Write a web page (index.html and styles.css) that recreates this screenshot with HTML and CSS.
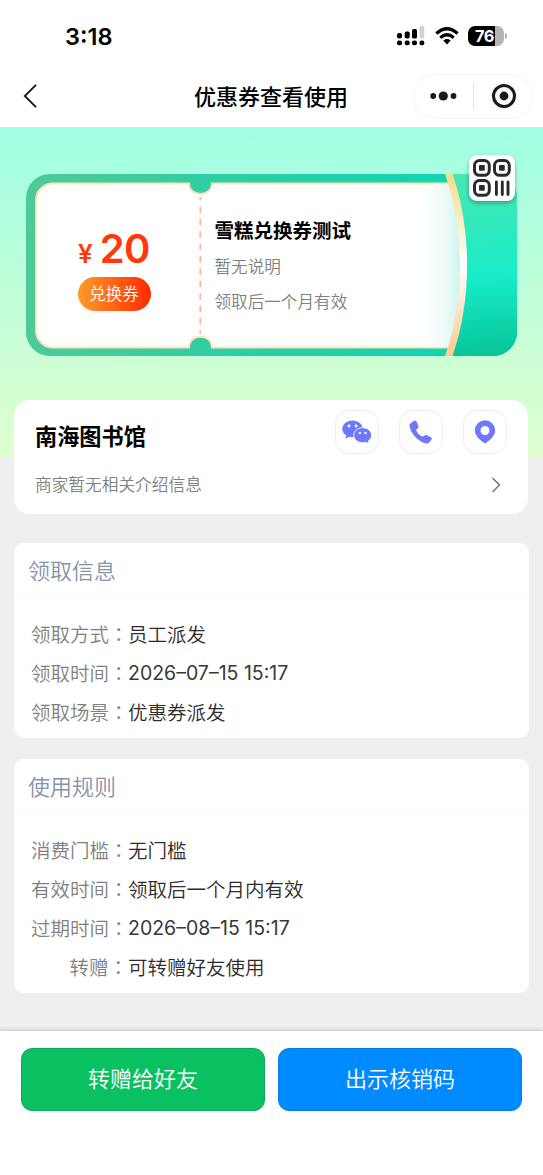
FILE: index.html
```html
<!DOCTYPE html>
<html lang="zh-CN">
<head>
<meta charset="utf-8">
<meta name="viewport" content="width=device-width, initial-scale=1">
<title>优惠券查看使用</title>
<link rel="stylesheet" href="styles.css">
</head>
<body>
<div class="page">
  <header class="statusbar">
    <span class="time">3:18</span>
    <div class="status-icons">
      <svg width="28" height="20" viewBox="0 0 28 20">
        <rect x="0" y="7" width="5" height="5.5" rx="2"/><rect x="7.7" y="5.5" width="5" height="7" rx="1.8"/><rect x="15" y="3" width="5" height="9.5" rx="1.6"/><rect x="22.5" y="0" width="4.8" height="12.5" rx="1.6" fill="#d2d2d2"/>
        <rect x="0" y="14.5" width="5" height="4.8" rx="2"/><rect x="7.7" y="14.5" width="5" height="4.8" rx="2"/><rect x="15" y="14.5" width="5" height="4.8" rx="2"/><rect x="22.5" y="14.5" width="4.8" height="4.8" rx="2"/>
      </svg>
      <svg class="wifi" width="24" height="18" viewBox="0 0 24 18">
        <path d="M1.4 6.5Q12 -3 22.6 6.5M5.3 10.7Q12 4.8 18.7 10.7" fill="none" stroke="#000" stroke-width="3.2"/>
        <path d="M8.3 13.4Q12 10.6 15.7 13.4L12 17.4Z"/>
      </svg>
      <div class="battery"><span class="level">76</span></div>
    </div>
  </header>
  <nav class="navbar">
    <svg class="back" width="14" height="24" viewBox="0 0 14 24"><path d="M13 .8 1.8 12 13 23.2" fill="none" stroke="#191919" stroke-width="1.9"/></svg>
    <h1 class="nav-title">优惠券查看使用</h1>
    <div class="capsule">
      <svg width="27" height="10" viewBox="0 0 27 10"><circle cx="3.2" cy="5" r="2.9"/><circle cx="13.3" cy="5" r="4.6"/><circle cx="23.5" cy="5" r="2.9"/></svg>
      <i class="divider"></i>
      <svg width="24" height="24" viewBox="0 0 24 24"><circle cx="12" cy="12" r="10.5" fill="none" stroke="#191919" stroke-width="3"/><circle cx="12" cy="12" r="4.4"/></svg>
    </div>
  </nav>

  <main class="content">
    <section class="ticket">
      <svg class="ticket-art" width="491" height="182" viewBox="0 0 491 182">
        <defs>
          <linearGradient id="frame"><stop offset="0" stop-color="#4eca99"/><stop offset=".5" stop-color="#26cfa6"/><stop offset="1" stop-color="#08d6b7"/></linearGradient>
          <linearGradient id="shade"><stop offset="0" stop-color="#fff"/><stop offset=".55" stop-color="#f0fbf9"/><stop offset="1" stop-color="#c9f4ec"/></linearGradient>
          <linearGradient id="flap" gradientUnits="userSpaceOnUse" x1="450" y1="0" x2="458" y2="182"><stop offset="0" stop-color="#48e6b1"/><stop offset=".57" stop-color="#18ecc8"/><stop offset="1" stop-color="#08c499"/></linearGradient>
          <linearGradient id="ribbon" x2="0" y2="1"><stop offset="0" stop-color="#f3dc8b"/><stop offset=".5" stop-color="#fff"/><stop offset="1" stop-color="#ffc98c"/></linearGradient>
          <clipPath id="curve"><path d="M0 0H420C440 56 438 126 420 182H0Z"/></clipPath>
        </defs>
        <rect width="491" height="182" rx="24" fill="url(#frame)"/>
        <g clip-path="url(#curve)">
          <path d="M27 9.5H163C163.5 23.5 185.5 23.5 186 9.5H450V173.5H186C185.5 159 163.5 159 163 173.5H27A17 17 0 0 1 10 156.5V26.5A17 17 0 0 1 27 9.5Z" fill="#fff" stroke="#ffe3b8" stroke-width="2"/>
          <rect x="395" y="10.5" width="42" height="162" fill="url(#shade)"/>
        </g>
        <path d="M174.3 23V160" stroke="#ffb596" stroke-width="1.7" stroke-dasharray="6.5 5.9" stroke-dashoffset="3"/>
        <path d="M426 0H467A24 24 0 0 1 491 24V158A24 24 0 0 1 467 182H426C446 126 446 56 426 0Z" fill="url(#flap)"/>
        <path d="M419 0H426.5C446 56 446 126 426.5 182H419C439 126 439 56 419 0Z" fill="url(#ribbon)"/>
      </svg>
      <div class="value">
        <div class="price"><span class="yen">¥</span><span class="amount">20</span></div>
        <span class="tag">兑换券</span>
      </div>
      <div class="detail">
        <h2>雪糕兑换券测试</h2>
        <p>暂无说明</p>
        <p>领取后一个月有效</p>
      </div>
      <div class="qr">
        <svg width="38" height="38" viewBox="0 0 38 38" fill="none" stroke="#2b2b2d">
          <g stroke-width="3"><rect x="1.5" y="1.5" width="14.8" height="14.8" rx="5"/><rect x="21.5" y="1.5" width="14.8" height="14.8" rx="5"/><rect x="1.5" y="21.5" width="14.8" height="14.8" rx="5"/></g>
          <g fill="#2b2b2d" stroke="none"><rect x="6" y="6" width="5.8" height="5.8" rx="1"/><rect x="26" y="6" width="5.8" height="5.8" rx="1"/><rect x="6" y="26" width="5.8" height="5.8" rx="1"/></g>
          <path d="M23.4 23V35.5M29.3 23V35.5M35 23V35.5" stroke-width="2.9" stroke-linecap="round"/>
        </svg>
      </div>
    </section>

    <section class="shop">
      <div class="shop-head">
        <h2>南海图书馆</h2>
        <div class="actions">
          <span class="action"><svg width="30" height="24" viewBox="0 0 30 24" fill="#6f78fb">
            <path d="M10.5 .5C4.7 .5.3 4.3.3 8.9c0 2.8 1.6 5.1 4 6.6l-1 3.3 3.900-2.100c1.100.3 2.200.5 3.500.5 5.700 0 10-3.700 10-8.300S16.300.5 10.500.5Z"/>
            <path d="M20.700 7.700c-5.200 0-9 3.400-9 7.500s3.800 7.500 9 7.500c1.100 0 2.100-.2 3-.4l3.400 1.600-.8-2.900c2-1.400 3.300-3.400 3.300-5.800 0-4.100-3.900-7.500-8.900-7.500Z" stroke="#fff" stroke-width=".9"/>
            <g fill="#fff"><circle cx="7" cy="6" r="1.4"/><circle cx="14" cy="6" r="1.4"/><circle cx="17.9" cy="12.9" r="1.2"/><circle cx="23.5" cy="12.9" r="1.2"/></g>
          </svg></span>
          <span class="action"><svg width="24" height="24" viewBox="0 0 24 24" fill="#6f78fb"><path d="M1.5 3.2 4.800.9C6 .2 7.200.5 7.700 1.700L9.300 6c.4 1.100.1 1.900-.7 2.500L7 9.700c1 3 3.600 5.700 6.600 7.100l1.800-1.400c.8-.6 1.700-.7 2.600-.2l3.900 2.100c1.100.7 1.200 1.800.4 2.800l-2.200 2.500c-1.200 1.200-3.500 1.200-5.700.2C8.100 20.100 2.100 13.100.7 7 .3 5.300.4 4.100 1.500 3.200Z"/></svg></span>
          <span class="action"><svg width="22" height="24" viewBox="0 0 22 24"><path d="M11 .3A10.100 10.100 0 0 0 .9 10.400C.9 16 5.800 19.600 11 23.600 16.200 19.600 21.100 16 21.100 10.400A10.100 10.100 0 0 0 11 .3Zm0 5.700a4.500 4.500 0 1 1 0 9 4.500 4.500 0 0 1 0-9Z" fill="#6f78fb" fill-rule="evenodd"/></svg></span>
        </div>
      </div>
      <div class="shop-info">
        <p>商家暂无相关介绍信息</p>
        <svg width="10" height="16" viewBox="0 0 10 16"><path d="M1.5 1 8.5 8 1.5 15" fill="none" stroke="#777" stroke-width="1.5"/></svg>
      </div>
    </section>

    <section class="card">
      <h3>领取信息</h3>
      <dl>
        <dt>领取方式<i lang="zh-TW">：</i></dt><dd>员工派发</dd>
        <dt>领取时间<i lang="zh-TW">：</i></dt><dd class="date">2026–07–15 15:17</dd>
        <dt>领取场景<i lang="zh-TW">：</i></dt><dd>优惠券派发</dd>
      </dl>
    </section>

    <section class="card">
      <h3>使用规则</h3>
      <dl>
        <dt>消费门槛<i lang="zh-TW">：</i></dt><dd>无门槛</dd>
        <dt>有效时间<i lang="zh-TW">：</i></dt><dd>领取后一个月内有效</dd>
        <dt>过期时间<i lang="zh-TW">：</i></dt><dd class="date">2026–08–15 15:17</dd>
        <dt>转赠<i lang="zh-TW">：</i></dt><dd>可转赠好友使用</dd>
      </dl>
    </section>
  </main>

  <footer class="bottom">
    <button class="btn green">转赠给好友</button>
    <button class="btn blue">出示核销码</button>
  </footer>
</div>
</body>
</html>
```
FILE: styles.css
```css
* { box-sizing: border-box; margin: 0; padding: 0; }
body { font-family: "Noto Sans CJK SC", sans-serif; background: #fff; color: #333; }
svg { display: block; flex: none; }
i { font-style: normal; }
.page { width: 543px; height: 1175px; display: flex; flex-direction: column; overflow: hidden; }

.statusbar { height: 72px; display: flex; justify-content: space-between; padding: 0 39px 0 65px; }
.time { font: 600 23.5px/73px Inter, sans-serif; color: #000; }
.status-icons { display: flex; align-items: center; gap: 9.5px; }
.battery { position: relative; width: 36px; height: 20px; border-radius: 7px; background: linear-gradient(90deg, #000 0 27px, #b5b5b5 27px); }
.battery::after { content: ""; position: absolute; right: -3px; top: 7px; width: 2px; height: 6px; background: #b5b5b5; border-radius: 0 2px 2px 0; }
.level { display: block; padding-left: 7px; font: 700 16.5px/20px Inter, sans-serif; letter-spacing: -.5px; color: #fff; }

.navbar { height: 55px; display: grid; grid-template-columns: 1fr auto 1fr; align-items: center; padding: 0 10px 7px 23px; }
.nav-title { font-size: 22px; line-height: 32px; font-weight: 500; color: #000; padding: 0 14px 3px 0; }
.capsule { justify-self: end; width: 120px; height: 45px; border: 1px solid #f4f4f4; border-radius: 23px; display: flex; align-items: center; padding-left: 16px; fill: #191919; }
.divider { width: 1px; height: 28px; background: #e5e5e5; margin: 0 18px 0 16px; }

.content { height: 904px; background: linear-gradient(#a0fee3, #dfffcf) 0 0 / 100% 330px no-repeat #eeeff1; padding: 47px 14px 0; }
.ticket { position: relative; width: 491px; height: 182px; margin-left: 12px; display: flex; }
.ticket-art { position: absolute; inset: 0; }
.value { position: relative; width: 174px; padding: 51px 0 0 2px; display: flex; flex-direction: column; align-items: center; }
.price { height: 52px; display: flex; align-items: baseline; gap: 7px; color: #ff380d; font-family: Inter, sans-serif; font-weight: 600; line-height: 48px; }
.yen { font-size: 26px; }
.amount { font-size: 40px; letter-spacing: -.6px; }
.tag { width: 73px; height: 34px; border-radius: 17px; background: linear-gradient(90deg, #ff9c2a, #ff2a00); color: #fff; font-size: 16.5px; line-height: 33px; font-weight: 350; text-align: center; }
.detail { position: relative; padding: 41px 0 0 14.5px; }
.detail h2 { font-size: 19.5px; line-height: 30px; font-weight: 700; color: #000; margin-bottom: 4px; }
.detail p { font-size: 16.6px; line-height: 35px; color: #808080; font-weight: 350; }
.qr { position: absolute; left: 443px; top: -19px; width: 46px; height: 46px; background: #fff; border-radius: 8px; display: grid; place-items: center; box-shadow: 0 2px 4px rgba(0,0,0,.3); }

.shop { width: 514px; height: 114px; margin-top: 44px; background: #fff; border-radius: 16px; padding: 10px 21px 0; }
.shop-head { display: flex; justify-content: space-between; height: 44px; }
.shop h2 { font-size: 22.2px; line-height: 51px; font-weight: 700; color: #000; }
.actions { display: flex; gap: 20px; }
.action { width: 44px; height: 44px; border: 1px solid #ececec; border-radius: 14px; display: grid; place-items: center; }
.shop-info { display: flex; justify-content: space-between; align-items: center; height: 61px; padding-right: 6px; font-size: 16.7px; font-weight: 350; color: #808080; }
.shop-info p { padding-bottom: 2px; }

.card { width: 515px; margin-top: 21px; background: #fff; border-radius: 10px; padding-bottom: 6px; }
.shop + .card { margin-top: 29px; }
.card h3 { height: 56px; padding-left: 14px; border-bottom: 1px solid #f9f9fa; color: #8793aa; font-size: 22px; line-height: 52px; font-weight: 350; }
.card dl { display: grid; grid-template-columns: 97px 1fr; grid-auto-rows: 39px; padding: 16px 0 0 17px; font-size: 19.5px; line-height: 37px; font-weight: 350; }
.card dt { color: #808080; text-align: right; white-space: nowrap; }
.card dt i { font-family: "Noto Sans CJK TC", sans-serif; }
.card dd { color: #2c2c2c; }
.card .date { font-family: Inter, sans-serif; font-weight: 400; line-height: 39px; color: #383838; }

.bottom { position: relative; flex: 1; background: #fff; display: flex; gap: 13px; padding: 17px 21px 0; box-shadow: 0 -1px 4px rgba(0,0,0,.18); }
.btn { flex: 1; height: 63px; border: 1px solid #0caa55; border-radius: 11px; color: #fff; font: 350 22px/56px "Noto Sans CJK SC", sans-serif; padding-bottom: 5px; }
.green { background: #09c160; }
.blue { background: #008aff; border-color: #087bdc; }
```
